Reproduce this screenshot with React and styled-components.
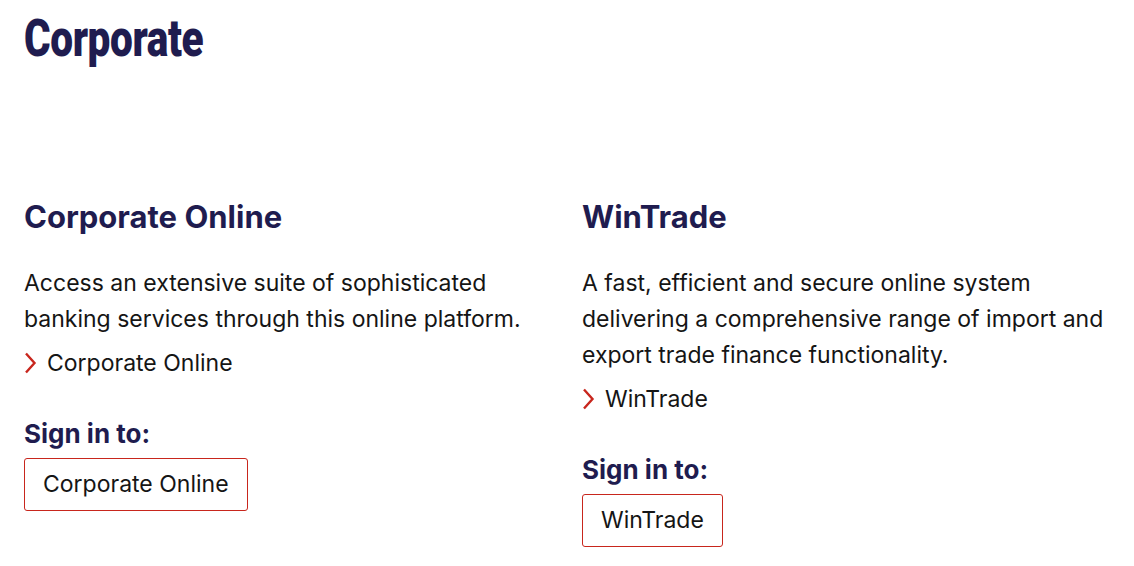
import styled, { createGlobalStyle } from "styled-components";

const GlobalStyle = createGlobalStyle`
    body {
        margin: 0;
        background: #ffffff;
        font-family: 'Inter', 'Noto Sans', sans-serif;
        color: #151515;
    }
`

const navy = "#1f1c4f"
const red = "#c8261d"

const products = [
    {
        name: "Corporate Online",
        text: "Access an extensive suite of sophisticated banking services through this online platform.",
    },
    {
        name: "WinTrade",
        text: "A fast, efficient and secure online system delivering a comprehensive range of import and export trade finance functionality.",
    },
]

export default function App() {
    return (
        <>
            <GlobalStyle />
            <Page>
                <PageTitle>Corporate</PageTitle>
                <Products>
                    {products.map(product => (
                        <Product key={product.name}>
                            <ProductTitle>{product.name}</ProductTitle>
                            <ProductText>{product.text}</ProductText>
                            <ProductLink href="#">
                                <svg width="13" height="24" viewBox="0 0 13 24" fill="none">
                                    <path d="M2 2.5 L10.5 12 L2 21.5" stroke={red} strokeWidth="2.4" />
                                </svg>
                                {product.name}
                            </ProductLink>
                            <SignInLabel>Sign in to:</SignInLabel>
                            <SignInButton>{product.name}</SignInButton>
                        </Product>
                    ))}
                </Products>
            </Page>
        </>
    )
}

const Page = styled.main`
    padding: 0 24px;
`

// no condensed face is installed, so a black face is narrowed
const PageTitle = styled.h1`
    margin: 0;
    padding-top: 9px;
    font-family: 'Roboto', 'DejaVu Sans', sans-serif;
    font-weight: 900;
    font-size: 52px;
    line-height: 60px;
    letter-spacing: -0.5px;
    color: ${navy};
    transform: scaleX(0.78);
    transform-origin: left center;
`

const Products = styled.section`
    display: grid;
    grid-template-columns: 1fr 1fr;
    column-gap: 30px;
    margin-top: 130px;
`

const Product = styled.article`
    display: flex;
    flex-direction: column;
    align-items: flex-start;
`

const ProductTitle = styled.h2`
    margin: 0;
    font-size: 31px;
    line-height: 36px;
    font-weight: 700;
    color: ${navy};
`

const ProductText = styled.p`
    margin: 30px 0 0;
    font-size: 23px;
    line-height: 36px;
`

const ProductLink = styled.a`
    display: flex;
    align-items: center;
    gap: 10px;
    margin-top: 8px;
    font-size: 23px;
    line-height: 36px;
    color: #151515;
    text-decoration: none;
`

const SignInLabel = styled.h3`
    margin: 37px 0 0;
    font-size: 26px;
    line-height: 32px;
    font-weight: 700;
    color: ${navy};
`

const SignInButton = styled.button`
    margin-top: 8px;
    padding: 9px 18px;
    font-family: 'Inter', 'Noto Sans', sans-serif;
    font-size: 23px;
    line-height: 33px;
    color: #151515;
    background: #ffffff;
    border: 1px solid ${red};
    border-radius: 3px;
    cursor: pointer;
`
